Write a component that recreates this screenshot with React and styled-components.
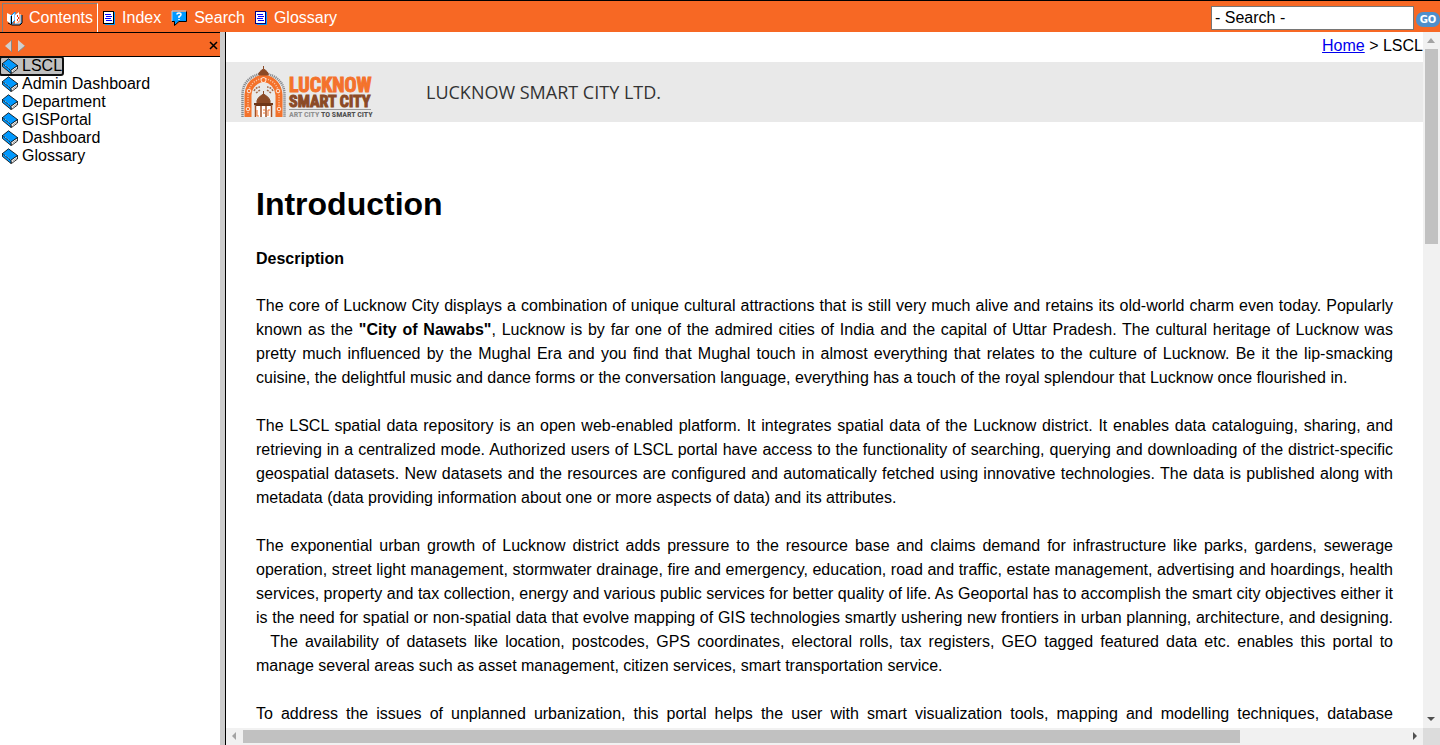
import React from "react";
import styled, { createGlobalStyle, css } from "styled-components";

const Global = createGlobalStyle`
  *, *::before, *::after { box-sizing: border-box; }
  body {
    margin: 0;
    background: #fff;
    color: #000;
    font-family: "Liberation Sans", Arial, sans-serif;
    font-size: 16px;
    line-height: 18px;
  }
`;

const Shell = styled.div`
  display: flex;
  flex-direction: column;
  height: 100vh;
  overflow: hidden;
`;

const Toolbar = styled.header`
  display: flex;
  align-items: stretch;
  flex: none;
  height: 32px;
  padding-left: 2px;
  border-top: 1px solid #000;
  background: #f76824;
`;

const Tabs = styled.nav`
  display: flex;
  gap: 4px;
  flex: 1;
`;

const TabButton = styled.button`
  display: flex;
  align-items: center;
  gap: 6px;
  padding: 0 4px 0 0;
  margin-top: 2px;
  border: 1px solid transparent;
  border-bottom: 0;
  background: none;
  color: #fff;
  font: inherit;
  ${({ $active }) =>
    $active &&
    css`
      padding-left: 3px;
      border-color: #808080 #fff transparent #808080;
    `}
`;

const SearchForm = styled.form`
  display: flex;
  align-items: center;
  gap: 2px;
`;

const SearchInput = styled.input`
  width: 203px;
  height: 24px;
  margin: 2px 0 0;
  padding: 0 3px;
  border: 1px solid #767676;
  background: #fff;
  color: #000;
  font: inherit;
`;

const GoButton = styled.button`
  width: 24px;
  height: 15px;
  margin-top: 6px;
  padding: 0;
  border: 0;
  border-radius: 7px;
  background: #4f8fca;
  color: #fff;
  font: bold 10px/15px "DejaVu Sans", sans-serif;
`;

const Body = styled.div`
  display: flex;
  flex: 1;
  min-height: 0;
`;

const Sidebar = styled.aside`
  flex: none;
  width: 226px;
  padding-right: 5px;
  border-right: 1px solid #000;
  background: linear-gradient(#ccc, #ccc) right / 5px 100% no-repeat;
`;

const PaneHeader = styled.div`
  display: flex;
  align-items: center;
  gap: 6px;
  height: 25px;
  padding: 2px 2px 0 5px;
  border-top: 1px solid #000;
  border-bottom: 1px solid #000;
  background: #f76824;
`;

const IconButton = styled.button`
  display: flex;
  padding: 0;
  border: 0;
  background: none;
  ${({ $end }) => $end && "margin-left: auto;"}
`;

const Tree = styled.ul`
  margin: 0;
  padding: 0;
  list-style: none;
`;

const TreeLink = styled.a`
  display: inline-flex;
  align-items: center;
  gap: 4px;
  height: 18px;
  padding: 0 1px 0 2px;
  color: #000;
  text-decoration: none;
  vertical-align: top;
  ${({ $current }) =>
    $current &&
    css`
      background: #c0c0c0;
      border-radius: 2px;
      outline: 2px solid #101010;
      outline-offset: -1px;
    `}
`;

const Frame = styled.div`
  display: grid;
  grid-template: minmax(0, 1fr) 17px / minmax(0, 1fr) 17px;
  flex: 1;
  min-width: 0;
`;

const Content = styled.main`
  overflow: hidden;
`;

const Crumbs = styled.nav`
  height: 30px;
  padding-top: 5px;
  text-align: right;
  a {
    color: #0000ee;
  }
`;

const Banner = styled.div`
  display: flex;
  align-items: center;
  gap: 50px;
  height: 60px;
  padding-left: 15px;
  background: #e9e9e9;
  color: #333;
  font: 18px/24px "Open Sans", sans-serif;
`;

const Article = styled.article`
  padding: 60px 30px 0;
  line-height: 24px;
  text-align: justify;
`;

const Title = styled.h1`
  margin: 0;
  font-size: 32px;
  line-height: 44px;
`;

const Subtitle = styled.h2`
  margin: 21px 0 23px;
  font-size: 16px;
  line-height: 24px;
`;

const Paragraph = styled.p`
  margin: 0 0 24px;
  ${({ $fill }) => $fill && "text-align-last: justify;"}
`;

const Bar = styled.div`
  display: flex;
  flex-direction: ${({ $vertical }) => ($vertical ? "column" : "row")};
  align-items: center;
  background: #f1f1f1;
`;

const Arrow = styled.svg`
  flex: none;
  display: block;
  fill: ${({ $dim }) => ($dim ? "#a3a3a3" : "#505050")};
`;

const Track = styled.div`
  flex: 1;
  align-self: stretch;
  padding: ${({ $vertical }) => ($vertical ? "0 2px" : "2px 0")};
`;

const Thumb = styled.div`
  background: #c1c1c1;
  width: ${({ $vertical }) => ($vertical ? "100%" : "85.7%")};
  height: ${({ $vertical }) => ($vertical ? "29.5%" : "100%")};
`;

const Corner = styled.div`
  background: #dcdcdc;
`;

const OpenBook = () => (
  <svg width="17" height="16" viewBox="0 0 17 16" aria-hidden="true">
    <path d="M2 13l4 2h8l2-2V5" fill="none" stroke="#000" />
    <path d="M3 12l3 2h7l2-1V5" fill="none" stroke="#0099ff" />
    <path d="M1 3l4 2v9l-4-3z" fill="#fff" />
    <path d="M5 6l4-4v8l-4 4z" fill="#fff" stroke="#0099ff" />
    <path d="M9 5l4-3v9l-4 3z" fill="#fff" />
    <path d="M5.500 6v8" stroke="#000" />
    <path d="M11.500 5v2M12.500 7v2M11.500 9v2" stroke="#f03010" />
    <path d="M10 13h4V4" fill="none" stroke="#fff" />
  </svg>
);

const PageIcon = ({ edge = "#000" }) => (
  <svg width="13" height="14" viewBox="0 0 13 14" shapeRendering="crispEdges" aria-hidden="true">
    <path d="M2 1h10v13H2z" fill="#0099ff" />
    <path d="M0 0h11v13H0z" fill={edge} />
    <path d="M1 1h9v11H1z" fill="#fff" />
    <path d="M2 3h6v1H2zM3 5h6v1H3zM2 7h6v1H2zM3 9h6v1H3z" fill="#0000ff" />
  </svg>
);

const GlossaryIcon = () => <PageIcon edge="#000080" />;

const HelpIcon = () => (
  <svg width="17" height="16" viewBox="0 0 17 16" aria-hidden="true">
    <path d="M1 2h14v9H8l-4 4v-4H1z" fill="#0099ff" />
    <path d="M1 11V1h14" fill="none" stroke="#9fd8ff" />
    <path d="M15.500 1.500v10H8l-4.500 4v-4H1" fill="none" stroke="#000" />
    <path d="M6 4.500Q6 3 8 3t2 1.500-2 2V8M8 9v1" fill="none" stroke="#fff" strokeWidth="1.500" />
  </svg>
);

const Book = () => (
  <svg width="16" height="16" viewBox="0 0 16 16" aria-hidden="true">
    <path d="M8.500 12l7-4.500V11L9.500 15.500z" fill="#fff" stroke="#000" strokeWidth="0.800" />
    <path d="M.5 5.500L6.500.8l9 6.700-7 5z" fill="#0099ff" stroke="#000" strokeWidth="0.800" />
    <path d="M.5 5.500v3l8.500 7v-3z" fill="#0099ff" stroke="#000" strokeWidth="0.800" />
    <path d="M1.500 6l7.500 6" stroke="#a8dcff" strokeDasharray="1 1" />
    <path d="M10.500 13l4.500-3" stroke="#777" strokeWidth="0.700" />
  </svg>
);

const CloseIcon = () => (
  <svg width="9" height="9" viewBox="0 0 9 9" aria-hidden="true">
    <path d="M1 1l7 7M8 1L1 8" stroke="#000" strokeWidth="1.500" />
  </svg>
);

const LogoText = styled.text`
  font-family: "Roboto Condensed", "Open Sans Condensed", Roboto, sans-serif;
  font-weight: bold;
  font-size: ${({ $size }) => $size}px;
`;

const Logo = () => (
  <svg width="135" height="52" viewBox="0 0 135 52" role="img" aria-label="Lucknow Smart City">
    <path d="M1.500 51V28Q2 11 22.500 7Q43 11 43.500 28v23" fill="none" stroke="#85888c" strokeWidth="2.500" strokeDasharray="1.200 0.800" />
    <path d="M7 51V29Q8 15 22.500 12Q37 15 38 29v22" fill="none" stroke="#f4722b" strokeWidth="7" />
    <path d="M7 47V29Q8 15 22.500 12Q37 15 38 29v18" fill="none" stroke="#fbc7a8" strokeWidth="1.500" strokeDasharray="1 1.500" />
    <g fill="#f4722b" stroke="#fff" strokeWidth="0.800">
      <circle cx="22.500" cy="14" r="2.500" />
      <circle cx="8" cy="25" r="1.800" />
      <circle cx="37" cy="25" r="1.800" />
      <circle cx="7" cy="43" r="1.800" />
      <circle cx="38" cy="43" r="1.800" />
    </g>
    <path d="M22.500 0v3M18 9q-1-3 4.500-6 5.500 3 4.500 6z" fill="#8b4a26" stroke="#8b4a26" />
    <path d="M13 25q2-4 6-4M15 27l4-3M32 25q-2-4-6-4M30 27l-4-3" fill="none" stroke="#a56b4a" strokeWidth="1.500" strokeDasharray="2 1" />
    <path d="M22.500 25v4M16 37q-1-5 6.500-9 7.500 4 6.500 9z" fill="#8b4a26" stroke="#8b4a26" />
    <path d="M13 37h19v2l-2 1H15l-2-1z" fill="#6f3719" />
    <path d="M14 40h17v11H14z" fill="#fff" />
    <path d="M14.500 40v11M20 40v11M25 40v11M30.500 40v11" stroke="#a34f24" strokeWidth="1.500" />
    <path d="M16 44v6h2M22 44h2M22 47h2M29 44h-2v6" fill="none" stroke="#f4722b" />
    <LogoText x="48" y="26" $size={20} fill="#f4722b" stroke="#f4722b" strokeWidth="1">
      LUCKNOW
    </LogoText>
    <LogoText x="48" y="41" $size={16} fill="#8b4a26" stroke="#8b4a26" strokeWidth="1">
      SMART CITY
    </LogoText>
    <path d="M48 43.500h82" stroke="#999" />
    <LogoText x="48" y="51" $size={8} fill="#8f8f8f">
      ART CITY <tspan fill="#505050">TO SMART CITY</tspan>
    </LogoText>
  </svg>
);

const tabs = [
  ["Contents", OpenBook],
  ["Index", PageIcon],
  ["Search", HelpIcon],
  ["Glossary", GlossaryIcon],
];

const topics = ["LSCL", "Admin Dashboard", "Department", "GISPortal", "Dashboard", "Glossary"];

const Triangle = ({ points, dim }) => (
  <Arrow width="17" height="17" viewBox="0 0 17 17" $dim={dim} aria-hidden="true">
    <polygon points={points} />
  </Arrow>
);

export default function App() {
  return (
    <Shell>
      <Global />
      <Toolbar>
        <Tabs>
          {tabs.map(([label, Icon], i) => (
            <TabButton key={label} type="button" $active={i === 0}>
              <Icon />
              {label}
            </TabButton>
          ))}
        </Tabs>
        <SearchForm onSubmit={(e) => e.preventDefault()}>
          <SearchInput aria-label="Search" defaultValue="- Search -" />
          <GoButton>GO</GoButton>
        </SearchForm>
      </Toolbar>
      <Body>
        <Sidebar>
          <PaneHeader>
            <IconButton type="button" aria-label="Previous">
              <svg width="7" height="12" viewBox="0 0 7 12">
                <path d="M7 0v12L0 6z" fill="#d0d0d0" />
                <path d="M6.500 0v12" stroke="#888" />
              </svg>
            </IconButton>
            <IconButton type="button" aria-label="Next">
              <svg width="7" height="12" viewBox="0 0 7 12">
                <path d="M0 0v12l7-6z" fill="#d0d0d0" />
                <path d="M0 12l7-6" stroke="#888" />
              </svg>
            </IconButton>
            <IconButton type="button" aria-label="Close" $end>
              <CloseIcon />
            </IconButton>
          </PaneHeader>
          <Tree>
            {topics.map((topic, i) => (
              <li key={topic}>
                <TreeLink href="#" $current={i === 0}>
                  <Book />
                  {topic}
                </TreeLink>
              </li>
            ))}
          </Tree>
        </Sidebar>
        <Frame>
          <Content>
            <Crumbs>
              <a href="#">Home</a> &gt; LSCL
            </Crumbs>
            <Banner>
              <Logo />
              LUCKNOW SMART CITY LTD.
            </Banner>
            <Article>
              <Title>Introduction</Title>
              <Subtitle>Description</Subtitle>
              <Paragraph>
                The core of Lucknow City displays a combination of unique cultural attractions that is
                still very much alive and retains its old-world charm even today. Popularly known as the{" "}
                <b>"City of Nawabs"</b>, Lucknow is by far one of the admired cities of India and the
                capital of Uttar Pradesh. The cultural heritage of Lucknow was pretty much influenced by
                the Mughal Era and you find that Mughal touch in almost everything that relates to the
                culture of Lucknow. Be it the lip-smacking cuisine, the delightful music and dance forms
                or the conversation language, everything has a touch of the royal splendour that Lucknow
                once flourished in.
              </Paragraph>
              <Paragraph>
                The LSCL spatial data repository is an open web-enabled platform. It integrates spatial
                data of the Lucknow district. It enables data cataloguing, sharing, and retrieving in a
                centralized mode. Authorized users of LSCL portal have access to the functionality of
                searching, querying and downloading of the district-specific geospatial datasets. New
                datasets and the resources are configured and automatically fetched using innovative
                technologies. The data is published along with metadata (data providing information about
                one or more aspects of data) and its attributes.
              </Paragraph>
              <Paragraph>
                The exponential urban growth of Lucknow district adds pressure to the resource base and
                claims demand for infrastructure like parks, gardens, sewerage operation, street light
                management, stormwater drainage, fire and emergency, education, road and traffic, estate
                management, advertising and hoardings, health services, property and tax collection,
                energy and various public services for better quality of life. As Geoportal has to
                accomplish the smart city objectives either it is the need for spatial or non-spatial data
                that evolve mapping of GIS technologies smartly ushering new frontiers in urban planning,
                architecture, and designing. &nbsp;&nbsp;The availability of datasets like location,
                postcodes, GPS coordinates, electoral rolls, tax registers, GEO tagged featured data etc.
                enables this portal to manage several areas such as asset management, citizen services,
                smart transportation service.
              </Paragraph>
              <Paragraph $fill>
                To address the issues of unplanned urbanization, this portal helps the user with smart
                visualization tools, mapping and modelling techniques, database
              </Paragraph>
            </Article>
          </Content>
          <Bar $vertical>
            <Triangle points="8,6 12,11 4,11" dim />
            <Track $vertical>
              <Thumb $vertical />
            </Track>
            <Triangle points="4,6 12,6 8,10" />
          </Bar>
          <Bar>
            <Triangle points="10,4 10,12 6,8" dim />
            <Track>
              <Thumb />
            </Track>
            <Triangle points="7,4 7,12 11,8" />
          </Bar>
          <Corner />
        </Frame>
      </Body>
    </Shell>
  );
}
